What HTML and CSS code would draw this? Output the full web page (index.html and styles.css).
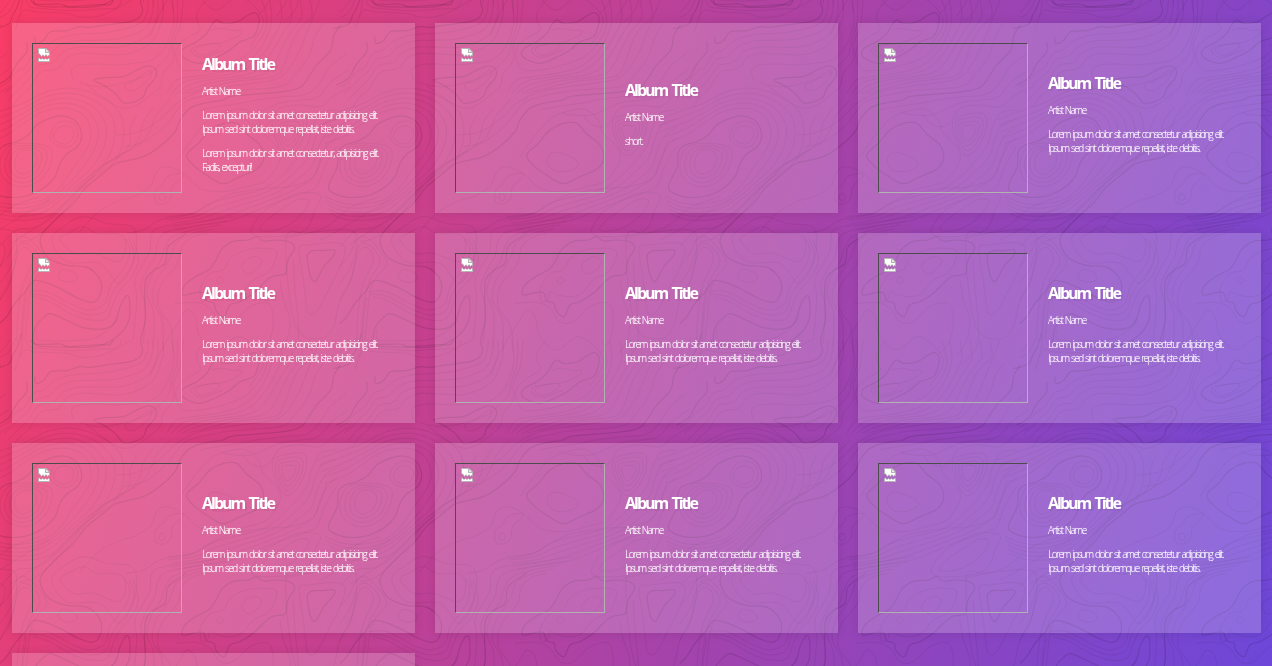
FILE: index.html
```html
<!DOCTYPE html>
<html lang="en">
<head>
<meta charset="utf-8">
<title>Albums</title>
<link rel="stylesheet" href="styles.css">
</head>
<body>
<svg class="topo" aria-hidden="true">
  <defs>
    <pattern id="topo-tile" width="340" height="340" patternUnits="userSpaceOnUse"><g id="contours" transform="scale(.33333)"></g></pattern>
    <symbol id="broken" viewBox="0 0 12 14">
      <path d="M0 0H8.2L12 3.8V9L11 7.3L9.5 9L8 7L6.5 9L5 7.2L3.5 9L1.5 6.5L0 6Z" fill="#b4b4b4"/>
      <path d="M1 1H7V5H11V6.5L9.5 8L8 6L6.5 8L5 6.2L3.5 8L1.8 5.6L1 5.2Z" fill="#fff"/>
      <path d="M8.2 1.5V3.8H10.6Z" fill="#fff"/>
      <path d="M0 10L1.5 9.4L3 11.4L4.5 9.8L6 11.4L7.5 9.8L9 11.4L10.5 9.8L12 10.6V14H0Z" fill="#b4b4b4"/>
      <path d="M1 11L1.6 10.6L3 12L4.5 10.8L6 12L7.5 10.8L9 12L10.5 10.8L11 11.2V13H1Z" fill="#fff"/>
    </symbol>
  </defs>
  <rect width="100%" height="100%" fill="url(#topo-tile)"/>
</svg>
<main class="albums" id="albums"></main>
<script src="app.js"></script>
</body>
</html>
```
FILE: styles.css
```css
* { box-sizing: border-box; }
html { font-size: 10px; height: 100%; overflow: hidden; }
body {
  margin: 0;
  height: 100%;
  overflow: hidden;
  color: #fff;
  font-family: "Open Sans", sans-serif;
  font-size: 10px;
  background: linear-gradient(110deg, #f93d66, #6d47d9) fixed;
}
.topo { position: fixed; inset: 0; width: 100%; height: 100%; z-index: -1; }
.albums {
  display: grid;
  grid-template-columns: repeat(3, 403px);
  grid-template-rows: repeat(3, 190px) 13px;
  gap: 20px;
  height: 100%;
  overflow: hidden;
  padding: 23px 11px 0 12px;
}
.album {
  display: grid;
  grid-template-columns: 150px 1fr;
  gap: 20px;
  align-items: center;
  padding: 20px;
  background: rgba(255, 255, 255, .2);
  box-shadow: 0 0 10px rgba(0, 0, 0, .1);
}
.album.next { padding: 0; }
.cover {
  width: 150px;
  height: 150px;
  padding: 4px 5px;
  border: 1px solid;
  border-color: #4c4c4c #b2b2b2 #b2b2b2 #4c4c4c;
}
.cover svg { display: block; width: 12px; height: 14px; }
.details { white-space: nowrap; }
.title {
  margin: 0 0 8px;
  font-size: 16px;
  line-height: 24px;
  font-weight: 700;
  letter-spacing: -2px;
  word-spacing: 2px;
  text-shadow: 2px 2px 0 rgba(0, 0, 0, .05);
}
.text {
  margin: 0 0 10px;
  line-height: 14px;
  font-weight: 300;
  letter-spacing: -1.45px;
  word-spacing: 1.2px;
  text-shadow: 0 0 1px rgba(255, 255, 255, .5);
}
.text.artist { letter-spacing: -1.5px; }
.contour { fill: none; stroke: #000; stroke-width: 2.4; stroke-opacity: .08; }
.contour.major { stroke-width: 3.5; stroke-opacity: .11; }
```
FILE: app.js
```javascript
const lorem = 'Lorem ipsum dolor sit amet consectetur adipisicing elit.<br>Ipsum sed sint doloremque repellat, iste debitis.';
const albums = [
  [lorem, 'Lorem ipsum dolor sit amet consectetur, adipisicing elit.<br>Facilis, excepturi!'],
  ['short.'],
  ...Array.from({ length: 7 }, () => [lorem])
];
document.getElementById('albums').innerHTML = albums.map(paragraphs => `
  <article class="album">
    <div class="cover"><svg><use href="#broken"/></svg></div>
    <div class="details">
      <h2 class="title">Album Title</h2>
      <p class="text artist">Artist Name</p>
      ${paragraphs.map(p => `<p class="text">${p}</p>`).join('')}
    </div>
  </article>`).join('') + '<article class="album next"></article>';

/* Topographic contours on a 1020-unit repeating tile. */
const parse = s => s.trim().split(' ').map(p => p.split(',').map(Number));
function smooth(p, closed) {
  const n = p.length;
  const at = i => closed ? p[(i + n) % n] : p[Math.max(0, Math.min(n - 1, i))];
  let d = `M${p[0]}`;
  for (let i = 0; i < (closed ? n : n - 1); i++) {
    const [a, b, c, e] = [at(i - 1), at(i), at(i + 1), at(i + 2)];
    d += `C${b[0] + (c[0] - a[0]) / 6},${b[1] + (c[1] - a[1]) / 6} ${c[0] - (e[0] - b[0]) / 6},${c[1] - (e[1] - b[1]) / 6} ${c}`;
  }
  return d + (closed ? 'Z' : '');
}
const out = [];
const line = (s, major, closed) => out.push([smooth(parse(s), closed), major]);
const ring = (s, major) => line(s, major, true);
/* n evenly spaced lines from a to b, both ends included */
function family(a, b, n, closed) {
  a = parse(a); b = parse(b);
  for (let k = 0; k < n; k++) {
    const t = n === 1 ? 0 : k / (n - 1);
    out.push([smooth(a.map((p, i) => [p[0] + (b[i][0] - p[0]) * t, p[1] + (b[i][1] - p[1]) * t]), closed), false]);
  }
}

line('92,0 105,12 140,13 180,12 205,20 240,18 300,14 330,14 340,0', true);
family('78,0 90,20 130,26 210,32 300,27 350,24 365,0', '58,50 75,30 110,36 200,40 245,52 310,44 395,0', 2);
family('30,0 15,22 0,38', '48,-5 25,38 0,52', 2);
line('65,-20 50,25 38,45 28,70 0,82 -20,85', true);
line('560,700 525,722 502,745 495,790 460,812 437,840 434,900 436,960 422,1020 428,1050 418,1072 390,1085 340,1092 270,1102 240,1100 200,1112 152,1115 132,1140 108,1150 104,1130', true);
family('445,0 440,40 420,70 350,92 290,100 220,104 165,120 130,150 100,160 75,200 50,215 25,245 0,260', '487,0 488,50 455,125 380,162 300,162 240,160 200,175 175,205 125,215 100,245 85,270 60,290 38,320', 4);
line('80,125 80,155 55,185 40,210 30,230 10,245 -10,255', true);
ring('545,165 552,145 590,125 620,100 635,75 650,60 670,70 710,66 740,48 762,38 777,52 774,80 760,110 720,125 690,150 650,172 600,190 565,181', true);
ring('585,150 605,137 645,130 660,138 640,155 605,165');
line('635,90 665,85 700,92 722,90 723,102 700,115 665,128 590,138 575,155 605,172 670,150');
family('515,0 522,60 510,110 490,150 455,180 400,190 340,195 290,192 240,195 215,210 220,240', '550,0 540,80 520,130 520,180 490,220 480,260 445,290 410,315 370,325 320,300 260,255', 3);
line('620,0 595,30 590,60 600,90 560,115 530,145 530,180 550,210 600,210 650,200 700,185 740,165 780,120 800,75 795,30 785,0');
family('810,0 815,60 800,110 770,160 720,200 650,220 580,230 530,240 500,280', '930,0 935,50 900,85 875,130 850,200 820,230 700,245 620,265 560,280 520,310', 5);
line('1022,75 1002,105 992,150 950,195 920,240 900,262 850,275 700,288 670,300 610,310 570,325 540,360 525,395 485,435 430,470 350,490 310,520 260,560 220,610 170,655 130,698 120,720 128,750 150,777 200,796 255,800 285,818 304,850 298,890 276,907 235,895 185,868 135,847 100,842 80,870 45,910 20,950 0,970', true);
family('970,70 945,110 925,170 880,230 840,260 700,272 600,290 550,310 510,360 470,400 420,430 370,440', '960,0 920,100 895,160 860,215 820,240 700,258 600,275 530,310 500,340 450,380 400,400 350,405', 2);

ring('280,240 315,233 370,230 410,210 445,198 468,210 465,235 440,265 430,290 400,306 370,308 345,280 310,255', true);
ring('376,252 400,245 425,225 452,210 452,228 430,252 405,270 382,270');
ring('195,378 215,385 221,405 210,425 192,432 172,425 160,408 172,385');
ring('195,363 224,374 233,405 221,432 195,442 165,432 150,410 165,375');
ring('245,405 232,440 200,462 180,490 165,530 130,565 90,585 50,592 10,590 -32,570 -30,545 -8,500 -5,455 15,435 50,425 85,405 110,375 150,355 190,348 228,365', true);
family('45,480 60,455 90,450 110,470 100,505 70,522 48,510', '0,490 25,440 90,430 155,450 135,525 75,560 15,540', 4, true);
family('-45,430 20,405 70,370 130,335 200,325 255,350 273,405 255,455 215,510 190,550 140,595 70,612 10,610 -45,590', '-70,360 10,330 70,310 140,275 220,265 300,290 360,340 370,420 340,490 280,530 210,590 140,650 30,660 -30,640', 5);
family('410,345 390,390 390,430 360,470 300,500 240,560 185,620 110,680 50,690 0,740', '510,300 470,345 450,390 420,430 350,470 300,510 240,570 190,635 110,710 60,725 0,770', 3);

ring('560,465 595,430 630,390 670,370 710,370 740,402 780,435 791,475 770,508 720,530 670,551 630,532 585,500', true);
ring('622,478 635,458 665,460 705,478 714,495 690,512 650,514 628,500');
line('540,470 590,400 640,350 700,330 740,330 775,360 790,400 830,440 840,480 800,540 740,560 670,575 600,565 550,520 500,500 470,515 450,560 400,590 350,605 290,640 240,695');
ring('477,591 483,580 494,585 494,597 484,602');
ring('464,595 468,570 490,550 502,530 540,520 548,530 518,560 513,590 500,608 475,612');
family('600,330 650,320 720,310 770,300 850,290 910,285 950,260 990,200 1040,160', '730,345 750,370 790,380 815,360 840,325 900,315 960,320 1000,290 1050,260', 3);
family('845,382 868,376 887,380 884,400 868,420 855,418', '817,368 865,342 915,345 915,400 878,460 845,455', 4, true);
family('1010,330 960,340 935,390 920,440 880,490 830,540 780,570 700,590 630,610 580,640 500,650', '1010,440 990,470 970,510 950,560 920,575 880,590 820,610 750,640 680,665 610,675 530,690', 5);
line('980,430 960,490 935,535 870,560 800,565 700,580 650,600 590,635 540,650 480,660 430,690 380,700');

ring('175,822 190,809 218,815 232,830 222,844 198,846 180,838');
family('180,718 205,700 250,680 290,700 355,702 376,725 372,765 350,785 280,760 220,760', '155,720 190,680 250,650 320,670 395,680 410,730 395,800 355,850 300,790 200,785', 2, true);
ring('100,1006 110,975 130,953 150,941 190,956 250,983 315,986 347,965 360,920 380,887 389,905 385,965 345,1015 285,1040 180,1041 110,1036', true);
line('110,990 110,1015 135,1022 210,1022 280,1015 335,980 350,950');
line('80,895 70,960 65,1040 45,1110');
family('100,890 150,905 210,940 270,960 320,955 340,910 360,870 395,830 415,780 400,720', '85,875 140,875 220,915 270,930 315,910 330,860 360,820 380,790 390,750 375,715', 3);
family('400,1020 410,900 405,840 430,790 450,750 455,700 490,680 600,665 700,650', '520,1060 512,980 475,920 480,860 510,820 535,785 545,740 580,710 620,700 700,660', 5);
family('0,900 30,850 45,790 60,750 85,745 100,780 70,850 55,930 50,1020', '0,800 30,760 50,720 75,710 110,740 140,790 110,830 90,880 75,1020', 3);

ring('548,885 555,855 590,828 628,808 648,780 665,748 700,724 745,720 770,710 790,723 830,720 870,726 884,745 866,775 860,800 855,822 815,830 790,850 760,880 720,905 690,915 672,950 648,932 642,910 620,902 610,878 585,878', true);
ring('725,804 735,783 765,770 785,782 772,806 745,822');
ring('652,838 661,831 672,840 665,849 653,848');
line('605,855 630,820 670,810 690,775 735,750 800,745 830,755 820,795 800,820 760,840 725,880 690,890 655,885 630,875 625,895 605,905 600,870 605,855');
ring('922,765 940,752 970,752 1003,750 1000,768 975,795 955,830 945,845 932,830 925,800', true);
family('898,745 930,735 1010,728 1035,748 1020,800 985,870 950,935 925,940 917,900 910,840', '860,710 920,700 1050,690 1070,740 1055,830 1020,900 1000,980 965,1015 900,1000 870,900', 2, true);
family('525,910 590,908 630,925 660,965 700,965 750,920 805,910 820,960 810,1020 780,1060', '450,1130 490,1040 540,960 560,930 585,950 600,1010 650,1050 720,1010 790,1080 750,1160', 2);
family('840,840 850,900 870,960 860,1020 830,1070', '880,780 885,870 895,970 890,1040 850,1090', 2);
family('780,690 800,660 850,625 890,600 925,600 915,630 880,665 830,690', '755,700 785,640 840,605 895,580 960,585 945,630 915,690 830,710', 2, true);
family('960,720 1000,700 1050,670 1100,640 1170,600', '850,715 970,685 1040,630 1080,610 1140,590', 2);

const g = document.getElementById('contours');
const tile = out.map(([d, major]) => `<path class="contour${major ? ' major' : ''}" d="${d}"/>`).join('');
g.innerHTML = [-1020, 0, 1020].flatMap(x => [-1020, 0, 1020].map(y => `<g transform="translate(${x} ${y})">${tile}</g>`)).join('');
```
